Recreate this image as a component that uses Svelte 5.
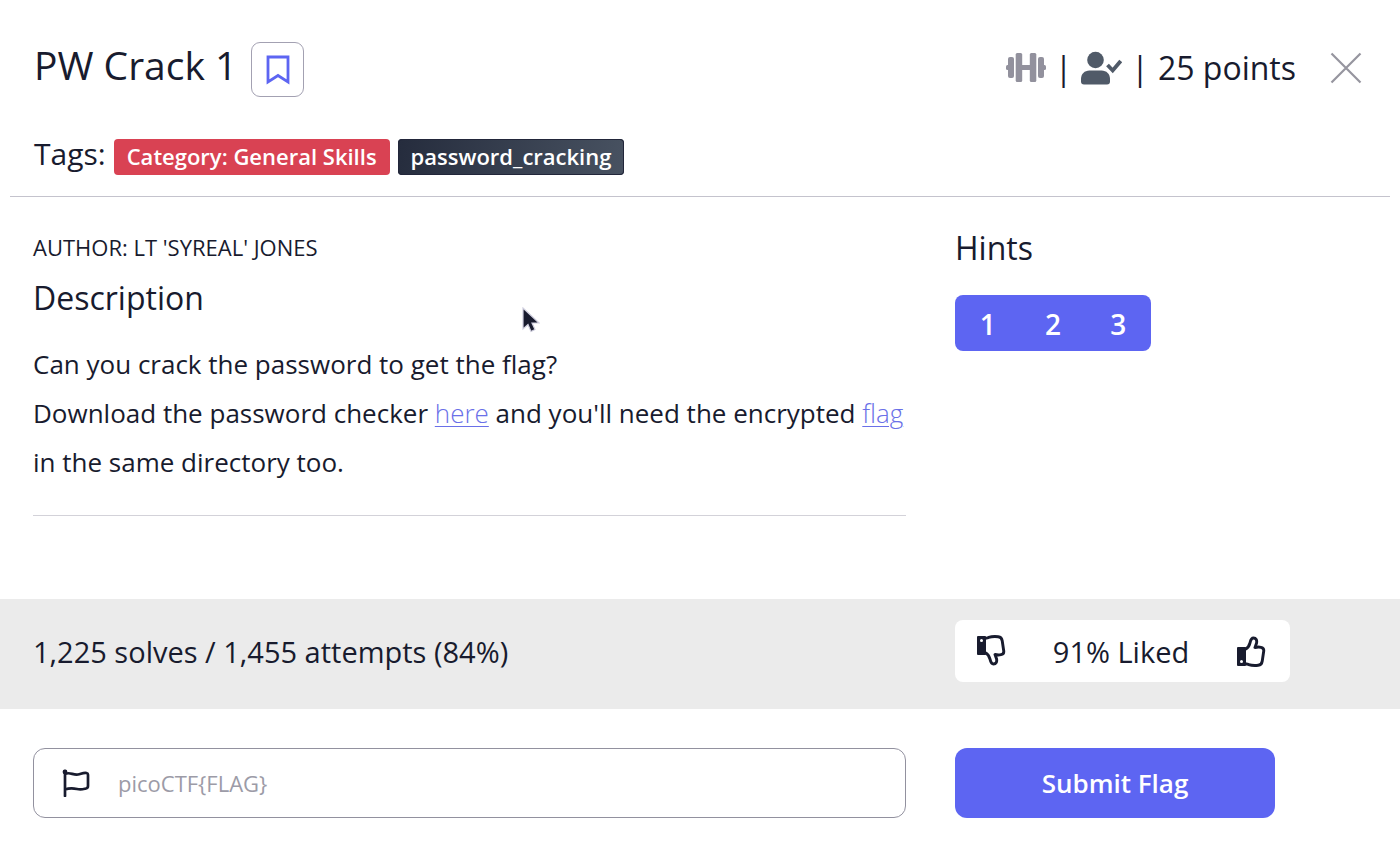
<script lang="ts">
  const tags = [
    { label: 'Category: General Skills', kind: 'category' },
    { label: 'password_cracking', kind: 'topic' },
  ];
  const hints = [1, 2, 3];
  let flag = $state('');
</script>

{#snippet thumb()}
  <path d="M2 13h7v17H2z" fill="currentColor" stroke="currentColor" stroke-width="2" stroke-linejoin="round" />
  <circle cx="5.500" cy="26.500" r="1.500" class="hole" />
  <path
    d="M9 14.500c3-1.500 4.300-3.700 5-6.700.6-2.700 1.300-4.800 3.500-4.800 2.600 0 3.700 2.300 3 5.300l-1.500 4.200c2-.5 4-.6 6-.2 2.300.5 3 2 2.700 4l-1.500 10c-.4 2.800-1.500 3.700-4 4-3.500.4-6.500.3-9.500-.7-1.200-.4-2.200-.8-3.700-.8"
    fill="none" stroke="currentColor" stroke-width="2.900" stroke-linejoin="round" />
{/snippet}

<main>
  <header>
    <div class="title-row">
      <h1>PW Crack 1</h1>
      <button class="bookmark" aria-label="Bookmark">
        <svg width="24" height="30" viewBox="0 0 24 30"><path d="M2 2h20v25l-10-6.500L2 27z" fill="none" stroke="#5d65f2" stroke-width="2.800" /></svg>
      </button>
      <div class="meta">
        <svg width="40" height="32" viewBox="0 0 40 32" fill="#92919d" aria-hidden="true">
          <rect y="13" width="7" height="5" rx="1.500" />
          <rect x="33" y="13" width="7" height="5" rx="1.500" />
          <rect x="15" y="13" width="10" height="5" />
          <rect x="2" y="5" width="6" height="21" rx="2" />
          <rect x="9.700" y="1" width="6.500" height="29" rx="1.500" />
          <rect x="23.800" y="1" width="6.500" height="29" rx="1.500" />
          <rect x="32" y="5" width="6" height="21" rx="2" />
        </svg>
        <span>|</span>
        <svg width="41" height="34" viewBox="0 0 41 34" fill="#505a68" aria-hidden="true">
          <circle cx="14.500" cy="9" r="8.300" />
          <path d="M8.500 19.500h12c5 0 8.500 3.500 8.500 8.500v2.500c0 2-1 3-3 3H3c-2 0-3-1-3-3V28c0-5 3.500-8.500 8.500-8.500z" />
          <path d="M26.500 14l5.200 5.500 8-9.500" fill="none" stroke="#505a68" stroke-width="3.800" />
        </svg>
        <span>|</span>
        <span>25 points</span>
      </div>
      <button class="close" aria-label="Close">
        <svg width="32" height="32" viewBox="0 0 32 32"><path d="M1.500 1.500l29 29M30.500 1.500l-29 29" stroke="#96959f" stroke-width="2.200" /></svg>
      </button>
    </div>
    <div class="tags">
      <span class="tags-label">Tags:</span>
      {#each tags as tag}
        <a href="#tag" class="tag {tag.kind}">{tag.label}</a>
      {/each}
    </div>
  </header>

  <div class="columns body">
    <section>
      <p class="author">AUTHOR: LT 'SYREAL' JONES</p>
      <h2>Description</h2>
      <p class="text">Can you crack the password to get the flag?<br />
        Download the password checker <a href="#checker">here</a> and you'll need the encrypted <a href="#flag">flag</a>
        in the same directory too.</p>
      <hr />
      <svg class="pointer" width="18" height="26" viewBox="0 0 18 26" aria-hidden="true">
        <path d="M1 1v21l5-4.500 3 7 4-2-3-6.500h7z" fill="#181b2e" stroke="#d0cfdf" stroke-width="1.200" />
      </svg>
    </section>
    <aside>
      <h2>Hints</h2>
      <div class="hints">
        {#each hints as hint}
          <button>{hint}</button>
        {/each}
      </div>
    </aside>
  </div>

  <div class="columns stats">
    <span>1,225 solves / 1,455 attempts (84%)</span>
    <div class="rating">
      <button aria-label="Dislike">
        <svg width="30" height="32" viewBox="0 0 30 32"><g transform="matrix(1 0 0 -1 0 32)">{@render thumb()}</g></svg>
      </button>
      <span>91% Liked</span>
      <button aria-label="Like">
        <svg width="30" height="32" viewBox="0 0 30 32">{@render thumb()}</svg>
      </button>
    </div>
  </div>

  <form class="columns" onsubmit={(e) => e.preventDefault()}>
    <label class="field">
      <svg width="28" height="28" viewBox="0 0 28 28" role="img" aria-label="Flag">
        <circle cx="3" cy="3" r="2.400" fill="#181b2e" />
        <path d="M3 2v25M3 5c5-2.500 8 1.500 13 .5 3-.5 5-2 8.500-1.500 1 .2 1.500.7 1.500 1.700V17c0 1.500-.5 2.200-2 2.500-4 1-5 1.500-9 .5-5-1.200-8-1-12 .5" fill="none" stroke="#181b2e" stroke-width="2.700" stroke-linecap="round" />
      </svg>
      <input type="text" placeholder={'picoCTF{FLAG}'} bind:value={flag} />
    </label>
    <button class="submit" type="submit">Submit Flag</button>
  </form>
</main>

<style>
  :global(body) {
    margin: 0;
    background: #fff;
  }
  main {
    color: #181b2e;
    font-family: 'Open Sans', sans-serif;
    font-size: 32px;
  }
  h1,
  h2,
  p {
    margin: 0;
    font-weight: 400;
  }
  button {
    padding: 0;
    border: 0;
    background: none;
    color: inherit;
    font: inherit;
    cursor: pointer;
  }
  svg {
    display: block;
    flex: none;
  }
  header {
    margin: 0 10px;
    padding: 42px 28px 21px 24px;
    border-bottom: 1px solid #c4c3cd;
  }
  .title-row {
    display: flex;
    align-items: center;
  }
  h1 {
    font-size: 39px;
    line-height: 46px;
    padding-bottom: 9px;
  }
  .bookmark {
    display: grid;
    place-items: center;
    box-sizing: border-box;
    width: 53px;
    height: 55px;
    margin-left: 14px;
    border: 1px solid #a3a1b2;
    border-radius: 9px;
  }
  .meta {
    display: flex;
    align-items: center;
    gap: 9px;
    margin-left: auto;
    padding-bottom: 4px;
    line-height: 44px;
  }
  .close {
    margin-left: 34px;
    padding-bottom: 4px;
  }
  .tags {
    display: flex;
    align-items: center;
    gap: 8px;
    margin-top: 42px;
  }
  .tags-label {
    font-size: 30px;
    line-height: 30px;
    padding-bottom: 6px;
  }
  .tag {
    padding: 0 13px 2px;
    border-radius: 4px;
    color: #fff;
    font-size: 22px;
    font-weight: 600;
    line-height: 34px;
    text-decoration: none;
  }
  .category {
    background: #d94253;
  }
  .topic {
    background: linear-gradient(100deg, #252c3d, #485261);
    box-shadow: inset 0 0 0 1px #22263a;
  }
  .columns {
    display: grid;
    grid-template-columns: minmax(0, 873fr) minmax(0, 412fr);
    column-gap: 49px;
    padding: 0 33px;
  }
  .body {
    padding-top: 29px;
    padding-bottom: 83px;
  }
  section {
    position: relative;
  }
  .author {
    font-size: 22px;
    line-height: 42px;
  }
  h2 {
    font-size: 32px;
    line-height: 44px;
  }
  section h2 {
    margin: 8px 0 20px;
  }
  .text {
    font-size: 26px;
    line-height: 49px;
  }
  .text a {
    color: #6a70e8;
    font-weight: 300;
    text-decoration-thickness: 1px;
    text-underline-offset: 3px;
  }
  hr {
    height: 1px;
    margin: 28px 0 0;
    border: 0;
    background: #d3d2d9;
  }
  .pointer {
    position: absolute;
    left: 56%;
    top: 81px;
  }
  .hints {
    display: inline-grid;
    grid-template-columns: repeat(3, 1fr);
    width: 196px;
    margin-top: 25px;
    border-radius: 8px;
    background: #5d65f2;
  }
  .hints button {
    height: 56px;
    padding-top: 2px;
    color: #fff;
    font-size: 28px;
    font-weight: 600;
  }
  .stats {
    align-items: center;
    padding-top: 21px;
    padding-bottom: 27px;
    background: #ebebeb;
    font-size: 29px;
  }
  .rating {
    display: flex;
    align-items: center;
    justify-content: space-between;
    box-sizing: border-box;
    width: 335px;
    height: 62px;
    max-width: 100%;
    padding: 0 24px 0 21px;
    border-radius: 8px;
    background: #fff;
  }
  .rating .hole,
  .hole {
    fill: #fff;
  }
  .columns:last-child {
    padding-top: 39px;
    padding-bottom: 39px;
  }
  .field {
    display: flex;
    align-items: center;
    gap: 28px;
    box-sizing: border-box;
    height: 70px;
    padding: 0 28px;
    border: 1px solid #92919f;
    border-radius: 12px;
  }
  .field input {
    flex: 1;
    min-width: 0;
    padding: 0;
    border: 0;
    outline: 0;
    background: none;
    color: inherit;
    font: inherit;
    font-size: 22px;
  }
  .field input::placeholder {
    color: #9c9ba7;
    opacity: 1;
  }
  .submit {
    width: 320px;
    max-width: 100%;
    height: 70px;
    border-radius: 12px;
    background: #5d65f2;
    color: #fff;
    font-size: 26px;
    font-weight: 600;
  }
</style>
